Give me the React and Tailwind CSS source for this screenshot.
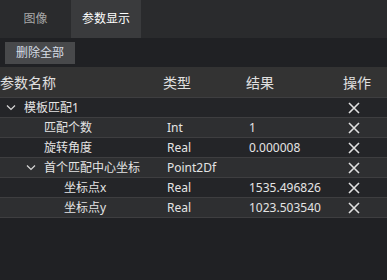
import React from 'react';

const rows = [
  { name: '模板匹配1', indent: 0, arrow: true, type: '', value: '' },
  { name: '匹配个数', indent: 2, type: 'Int', value: '1' },
  { name: '旋转角度', indent: 2, type: 'Real', value: '0.000008' },
  { name: '首个匹配中心坐标', indent: 1, arrow: true, type: 'Point2Df', value: '' },
  { name: '坐标点x', indent: 3, type: 'Real', value: '1535.496826' },
  { name: '坐标点y', indent: 3, type: 'Real', value: '1023.503540' },
];

function Chevron() {
  return (
    <svg width="10" height="6" viewBox="0 0 10 6" fill="none" stroke="#d8d8d8" strokeWidth="1.2">
      <path d="M1 0.5 L5 4.5 L9 0.5" />
    </svg>
  );
}

function Cross() {
  return (
    <svg width="12" height="12" viewBox="0 0 12 12" stroke="#e0e0e0" strokeWidth="1.6">
      <path d="M1 1 L11 11 M11 1 L1 11" />
    </svg>
  );
}

export default function App() {
  return (
    <div
      className="w-[387px] h-[280px] bg-[#202124] text-[#e4e4e4] overflow-hidden"
      style={{ fontFamily: '"Noto Sans", "Noto Sans CJK SC", sans-serif' }}
    >
      <div className="flex h-[38px] bg-[#2a2b2d] text-[12px]">
        <div className="w-[71px] flex items-center justify-center text-[#a8a8a8]">图像</div>
        <div className="w-[70px] flex items-center justify-center bg-[#3a3b3d] text-white">参数显示</div>
      </div>
      <div className="h-[29px] flex items-center pl-[5px]">
        <div className="w-[70px] h-[22px] bg-[#48494b] flex items-center justify-center text-[12px] text-[#d6dde6]">删除全部</div>
      </div>
      <div className="grid grid-cols-[163px_83px_97px_1fr] h-[30px] items-center bg-[#333333] text-[14px] text-[#e0e0e0]">
        <div>参数名称</div>
        <div>类型</div>
        <div>结果</div>
        <div>操作</div>
      </div>
      {rows.map((r, i) => (
        <div
          key={i}
          className={`grid grid-cols-[167px_82px_95px_1fr] h-[20px] items-center text-[12px] border-t border-[#3e3e40] ${
            i % 2 === 0 ? 'bg-[#242528]' : 'bg-[#2e2f31]'
          }`}
        >
          <div className="flex items-center" style={{ paddingLeft: r.arrow ? 6 + r.indent * 20 : 4 + r.indent * 20 }}>
            {r.arrow && <span className="w-[18px] flex items-center"><Chevron /></span>}
            <span>{r.name}</span>
          </div>
          <div>{r.type}</div>
          <div>{r.value}</div>
          <div className="flex pl-[4px]"><Cross /></div>
        </div>
      ))}
      <div className="border-t border-[#3e3e40]" />
    </div>
  );
}
